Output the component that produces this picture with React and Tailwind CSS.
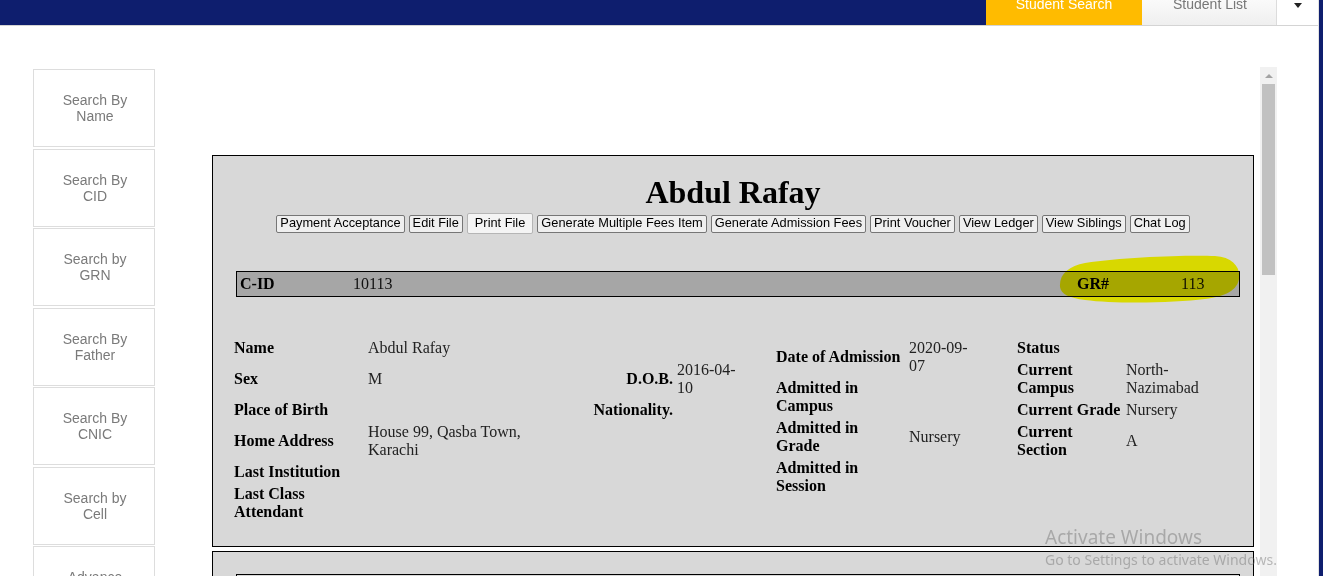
import React from "react";

const sideItems = [
  ["Search By", "Name"],
  ["Search By", "CID"],
  ["Search by", "GRN"],
  ["Search By", "Father"],
  ["Search By", "CNIC"],
  ["Search by", "Cell"],
  ["Advance", "Search"],
];

const buttons = [
  "Payment Acceptance",
  "Edit File",
  "Print File",
  "Generate Multiple Fees Item",
  "Generate Admission Fees",
  "Print Voucher",
  "View Ledger",
  "View Siblings",
  "Chat Log",
];

function Lines({ text }) {
  const parts = text.split("\n");
  return parts.map((p, i) => (
    <React.Fragment key={i}>
      {p}
      {i < parts.length - 1 && <br />}
    </React.Fragment>
  ));
}

const tableA = [
  ["Name", "Abdul Rafay", "", ""],
  ["Sex", "M", "D.O.B.", "2016-04-\n10"],
  ["Place of Birth", "", "Nationality.", ""],
  ["Home Address", "House 99, Qasba Town,\nKarachi", "", ""],
  ["Last Institution", "", "", ""],
  ["Last Class\nAttendant", "", "", ""],
];

const tableB = [
  ["Date of Admission", "2020-09-\n07"],
  ["Admitted in\nCampus", ""],
  ["Admitted in\nGrade", "Nursery"],
  ["Admitted in\nSession", ""],
];

const tableC = [
  ["Status", ""],
  ["Current\nCampus", "North-\nNazimabad"],
  ["Current Grade", "Nursery"],
  ["Current\nSection", "A"],
];

function Cell({ children, bold, right }) {
  return (
    <div
      className={
        "py-[2px] leading-[18px] whitespace-nowrap " +
        (bold ? "font-bold text-black " : "text-[#222] ") +
        (right ? "text-right pr-[4px]" : "")
      }
    >
      <Lines text={children} />
    </div>
  );
}

export default function App() {
  return (
    <div className="w-[1323px] h-[576px] overflow-hidden bg-[#0e1e6e] flex">
      <div className="w-[1319px] h-[576px] bg-white flex flex-col border-r border-[#e2e2e2]">
        {/* header */}
        <div className="h-[26px] flex border-b border-[#d4d4d4] shrink-0" style={{ fontFamily: '"Liberation Sans", Arial, sans-serif' }}>
          <div className="flex-1 bg-[#0e1e6e]" />
          <div className="w-[156px] bg-[#ffbb00] flex justify-center overflow-hidden">
            <span className="text-white text-[14px] leading-[16px] -mt-[4px]">Student Search</span>
          </div>
          <div className="w-[135px] bg-gradient-to-b from-[#fafafa] to-[#efefef] border-r border-[#dcdcdc] flex justify-center overflow-hidden">
            <span className="text-[#777] text-[14px] leading-[16px] -mt-[4px] ml-[2px]">Student List</span>
          </div>
          <div className="w-[41px] bg-white flex justify-center pt-[3px]">
            <div className="w-0 h-0 border-l-[4.5px] border-r-[4.5px] border-t-[5px] border-l-transparent border-r-transparent border-t-[#222]" />
          </div>
        </div>

        {/* body */}
        <div className="flex flex-1 min-h-0">
          <aside
            className="w-[122px] ml-[33px] mt-[43px] flex flex-col gap-[1.5px] shrink-0"
            style={{ fontFamily: '"Liberation Sans", Arial, sans-serif' }}
          >
            {sideItems.map(([a, b], i) => (
              <div
                key={i}
                className="h-[78px] shrink-0 border border-[#dddddd] bg-white flex flex-col items-center justify-center text-[14px] leading-[16px] text-[#7a7a7a] pl-[2px]"
              >
                <span>{a}</span>
                <span>{b}</span>
              </div>
            ))}
          </aside>

          {/* scroll area */}
          <div className="w-[1122px] mt-[41px] flex relative">
            <div className="flex-1 pl-[57px] pr-[6px] pt-[88px]" style={{ fontFamily: '"Liberation Serif", "Times New Roman", serif' }}>
              {/* panel 1 */}
              <div className="h-[392px] border border-black bg-[#d8d8d8] flex flex-col">
                <h1 className="mt-[18px] text-center text-[32px] leading-[37px] font-bold text-black">Abdul Rafay</h1>
                <div className="mt-[2px] h-[21px] flex justify-center items-center gap-[4px]" style={{ fontFamily: '"Liberation Sans", Arial, sans-serif' }}>
                  {buttons.map((b) =>
                    b === "Print File" ? (
                      <span
                        key={b}
                        className="h-[21px] px-[7px] flex items-center border border-[#b5b5b5] bg-[#f4f4f4] rounded-[2px] text-[12.8px] text-black leading-none"
                      >
                        {b}
                      </span>
                    ) : (
                      <span
                        key={b}
                        className="h-[18px] px-[3px] flex items-center border border-[#767676] bg-[#efefef] rounded-[2px] text-[12.8px] text-black leading-none"
                      >
                        {b}
                      </span>
                    )
                  )}
                </div>

                {/* C-ID bar */}
                <div className="mt-[37px] ml-[23px] mr-[13px] h-[26px] border border-black bg-[#a6a6a6] flex items-center pl-[3px] text-[16px] leading-[18px] relative">
                  <div className="w-[113px] font-bold text-black">C-ID</div>
                  <div className="flex-1 text-[#111]">10113</div>
                  <div className="w-[104px] font-bold text-black">GR#</div>
                  <div className="w-[58px] text-[#111]">113</div>
                  <svg
                    className="absolute mix-blend-multiply pointer-events-none"
                    style={{ left: 818, top: -20 }}
                    width="190"
                    height="56"
                    viewBox="0 0 190 56"
                  >
                    <path
                      d="M5 35 C4 22 14 14 30 11 C70 5 130 3 160 4 C178 5 186 16 184 27 C182 38 172 44 150 47 C120 51 60 52 30 48 C14 46 6 42 5 35 Z"
                      fill="#ffff00"
                    />
                  </svg>
                </div>

                {/* details */}
                <div className="mt-[40px] pl-[21px] flex items-start text-[16px]">
                  <div className="grid grid-cols-[134px_225px_84px_64px] items-center">
                    {tableA.map((r, i) => (
                      <React.Fragment key={i}>
                        <Cell bold>{r[0]}</Cell>
                        <Cell>{r[1]}</Cell>
                        <Cell bold right>{r[2]}</Cell>
                        <Cell>{r[3]}</Cell>
                      </React.Fragment>
                    ))}
                  </div>
                  <div className="ml-[35px] grid grid-cols-[133px_66px] items-center">
                    {tableB.map((r, i) => (
                      <React.Fragment key={i}>
                        <Cell bold>{r[0]}</Cell>
                        <Cell>{r[1]}</Cell>
                      </React.Fragment>
                    ))}
                  </div>
                  <div className="ml-[42px] grid grid-cols-[109px_80px] items-center">
                    {tableC.map((r, i) => (
                      <React.Fragment key={i}>
                        <Cell bold>{r[0]}</Cell>
                        <Cell>{r[1]}</Cell>
                      </React.Fragment>
                    ))}
                  </div>
                </div>
              </div>

              {/* panel 2 */}
              <div className="mt-[4px] h-[120px] border border-black bg-[#d8d8d8] pt-[22px]">
                <div className="ml-[23px] mr-[13px] h-[60px] border border-black" />
              </div>
            </div>

            {/* scrollbar */}
            <div className="w-[17px] bg-[#f1f1f1] flex flex-col items-center shrink-0">
              <div className="h-[17px] w-full flex items-center justify-center">
                <div className="w-0 h-0 border-l-[4px] border-r-[4px] border-b-[4px] border-l-transparent border-r-transparent border-b-[#a3a3a3]" />
              </div>
              <div className="w-[13px] h-[191px] bg-[#c1c1c1]" />
            </div>

            {/* windows watermark */}
            <div
              className="absolute left-[890px] top-[458px] pointer-events-none text-[rgba(110,110,110,0.45)]"
              style={{ fontFamily: '"Noto Sans", "Open Sans", sans-serif' }}
            >
              <div className="text-[19px] leading-[24px]">Activate Windows</div>
              <div className="text-[14px] leading-[20px] mt-[1px] whitespace-nowrap">Go to Settings to activate Windows.</div>
            </div>
          </div>
        </div>
      </div>
    </div>
  );
}
